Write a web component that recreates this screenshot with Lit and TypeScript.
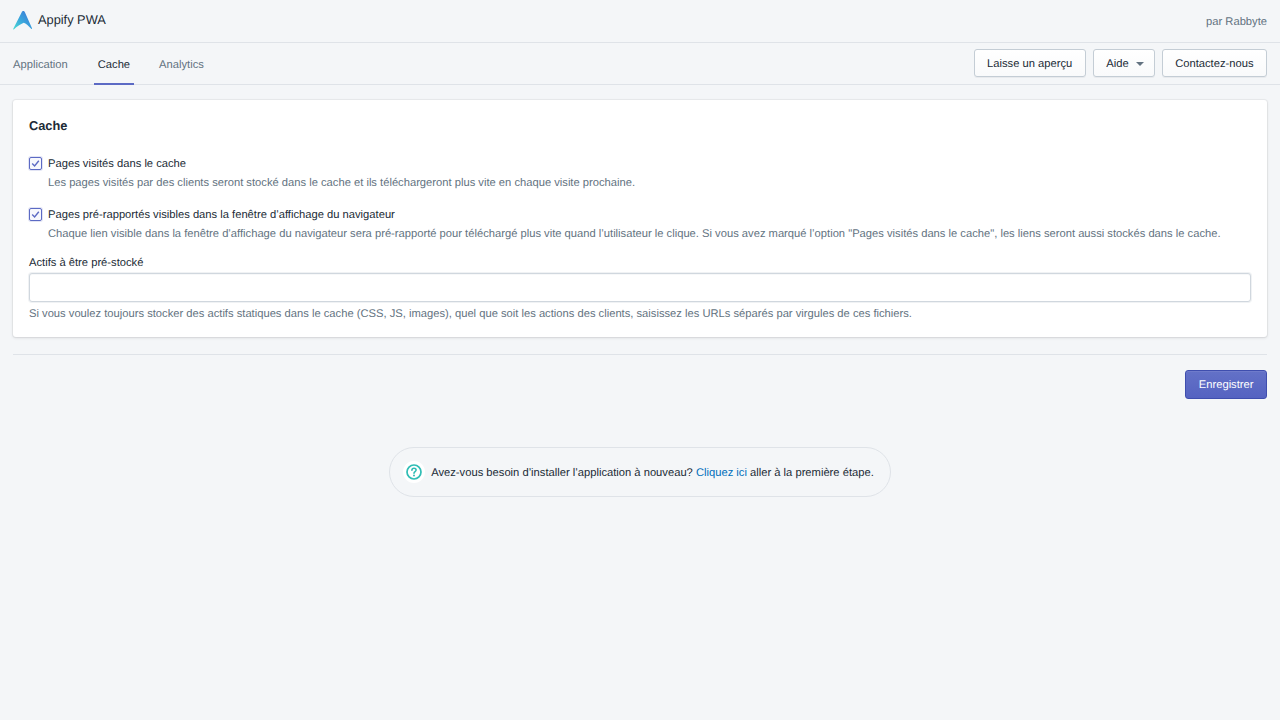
import { LitElement, html, css } from "lit";
import { customElement } from "lit/decorators.js";

@customElement("app-root")
export class AppRoot extends LitElement {
  static styles = css`
    :host { display: block; min-height: 720px; background: #f4f6f8; font-family: "Liberation Sans", Arial, sans-serif; font-size: 11.2px; line-height: 16px; color: #212b36; text-rendering: geometricPrecision; }
    .top { height: 43px; box-sizing: border-box; display: flex; align-items: center; justify-content: space-between; padding: 0 13px 2px; border-bottom: 1px solid #dfe3e8; }
    .brand { display: flex; align-items: center; gap: 5px; font-size: 12.8px; }
    .brand svg { display: block; }
    .by { color: #637381; font-size: 11.2px; margin-top: 4px; }
    .nav { height: 42px; box-sizing: border-box; display: flex; align-items: stretch; justify-content: space-between; padding: 0 13px; border-bottom: 1px solid #dfe3e8; }
    .tabs { display: flex; }
    .tab { display: flex; align-items: center; padding: 4px 3px 0; margin: 0 0 -1px; color: #637381; border-bottom: 2px solid transparent; }
    .tab.first { padding-left: 0; margin-right: 23px; }
    .tab.on { color: #212b36; border-bottom-color: #5c6ac4; margin-right: 22px; padding-left: 4px; padding-right: 4px; }
    .actions { display: flex; gap: 7px; align-items: center; padding-bottom: 2px; }
    .btn { height: 28px; box-sizing: border-box; display: flex; align-items: center; gap: 7px; padding: 2px 12.5px 0; background: linear-gradient(180deg, #fff, #f9fafb); border: 1px solid #c4cdd5; border-radius: 3px; box-shadow: 0 1px 0 rgba(22,29,37,.05); }
    .btn.menu { padding-right: 10px; }
    .caret { width: 0; height: 0; border: 4px solid transparent; border-top-color: #637381; border-bottom: 0; }
    .main { padding: 15px 13px 0; }
    .card { background: #fff; border-radius: 3px; box-shadow: 0 0 0 1px rgba(63,63,68,.05), 0 1px 3px rgba(63,63,68,.15); padding: 16px; height: 237px; box-sizing: border-box; }
    h2 { margin: 0; font-size: 12.8px; line-height: 20px; font-weight: 700; }
    .check { display: flex; gap: 6px; margin-top: 19px; }
    .check + .check { margin-top: 13px; }
    .box { flex: none; width: 13px; height: 13px; box-sizing: border-box; border: 1px solid #5c6ac4; border-radius: 2px; margin-top: 2px; display: flex; align-items: center; justify-content: center; background: #f7f8fd; box-shadow: 0 0 0 1px rgba(92,106,196,.18); }
    .box svg { display: block; }
    .lbl { line-height: 19px; }
    .help { color: #637381; line-height: 19px; margin-top: 0; white-space: nowrap; }
    .field-label { margin-top: 10px; line-height: 19px; }
    .input { height: 29px; box-sizing: border-box; margin-top: 0; background: #fff; border: 1px solid #d0d7de; border-radius: 3px; box-shadow: 0 0 0 1px rgba(196,205,213,.25), inset 0 1px 0 rgba(99,115,129,.05); }
    .field-help { color: #637381; margin-top: 3px; line-height: 19px; }
    hr { border: 0; border-top: 1px solid #dfe3e8; margin: 17px 0 0; }
    .save { display: flex; justify-content: flex-end; margin-top: 15px; }
    .primary { height: 29px; box-sizing: border-box; display: flex; align-items: center; padding: 1px 12.5px 0; color: #fff; background: linear-gradient(180deg, #6371c7, #5563c1); border: 1px solid #3f4eae; border-radius: 3px; box-shadow: inset 0 1px 0 #6f7bcb; }
    .note-wrap { display: flex; justify-content: center; margin-top: 48px; }
    .note { height: 50px; box-sizing: border-box; display: flex; align-items: center; gap: 6px; padding: 0 16px 0 13px; border: 1px solid #dfe3e8; border-radius: 25px; }
    .msg { margin-top: 2px; }
    .halo { width: 22px; height: 22px; border-radius: 50%; background: #fff; display: flex; align-items: center; justify-content: center; }
    .note svg { display: block; }
    a { color: #006fbb; text-decoration: none; }
  `;

  render() {
    return html`
      <div class="top">
        <div class="brand">
          <svg width="20" height="20" viewBox="0 0 20 20">
            <defs>
              <linearGradient id="g" x1="0.85" y1="0.2" x2="0.05" y2="0.95">
                <stop offset="0" stop-color="#3a80d8" /><stop offset="0.5" stop-color="#3aa8dc" /><stop offset="1" stop-color="#4ad8d4" />
              </linearGradient>
            </defs>
            <path d="M10.3 1 C11.2 1 11.6 1.6 12 2.4 L19 18.2 C19.2 18.9 18.8 19.2 18.2 18.8 C15.8 16.2 13.6 14 10.8 12.8 C7.5 14 4 16.6 0.8 19.4 C0.3 19.6 0 19.3 0.3 18.8 L8.6 2.4 C9 1.6 9.4 1 10.3 1 Z" fill="url(#g)" />
          </svg>
          <span>Appify PWA</span>
        </div>
        <span class="by">par Rabbyte</span>
      </div>
      <div class="nav">
        <div class="tabs">
          <div class="tab first">Application</div>
          <div class="tab on">Cache</div>
          <div class="tab">Analytics</div>
        </div>
        <div class="actions">
          <div class="btn">Laisse un aperçu</div>
          <div class="btn menu">Aide <span class="caret"></span></div>
          <div class="btn">Contactez-nous</div>
        </div>
      </div>
      <div class="main">
        <div class="card">
          <h2>Cache</h2>
          <div class="check">
            <span class="box">${this.tick()}</span>
            <div>
              <div class="lbl">Pages visités dans le cache</div>
              <div class="help">Les pages visités par des clients seront stocké dans le cache et ils téléchargeront plus vite en chaque visite prochaine.</div>
            </div>
          </div>
          <div class="check">
            <span class="box">${this.tick()}</span>
            <div>
              <div class="lbl">Pages pré-rapportés visibles dans la fenêtre d’affichage du navigateur</div>
              <div class="help">Chaque lien visible dans la fenêtre d’affichage du navigateur sera pré-rapporté pour téléchargé plus vite quand l’utilisateur le clique. Si vous avez marqué l’option "Pages visités dans le cache", les liens seront aussi stockés dans le cache.</div>
            </div>
          </div>
          <div class="field-label">Actifs à être pré-stocké</div>
          <div class="input"></div>
          <div class="field-help">Si vous voulez toujours stocker des actifs statiques dans le cache (CSS, JS, images), quel que soit les actions des clients, saisissez les URLs séparés par virgules de ces fichiers.</div>
        </div>
        <hr />
        <div class="save"><div class="primary">Enregistrer</div></div>
        <div class="note-wrap">
          <div class="note">
            <span class="halo">
            <svg width="16" height="16" viewBox="0 0 16 16" fill="none">
              <circle cx="8" cy="8" r="7" stroke="#2fbdb5" stroke-width="1.7" />
              <path d="M5.9 6.3 C5.9 5 6.9 4.2 8 4.2 C9.2 4.2 10.1 5 10.1 6.1 C10.1 7.6 8 7.6 8 9.3" stroke="#2fbdb5" stroke-width="1.6" stroke-linecap="round" />
              <circle cx="8" cy="11.6" r="1" fill="#2fbdb5" />
            </svg></span>
            <span class="msg">Avez-vous besoin d’installer l’application à nouveau? <a href="#">Cliquez ici</a> aller à la première étape.</span>
          </div>
        </div>
      </div>
    `;
  }

  tick() {
    return html`<svg width="9" height="9" viewBox="0 0 9 9" fill="none"><path d="M1.2 4.6 L3.6 7 L7.8 1.8" stroke="#5c6ac4" stroke-width="1.4" /></svg>`;
  }
}
